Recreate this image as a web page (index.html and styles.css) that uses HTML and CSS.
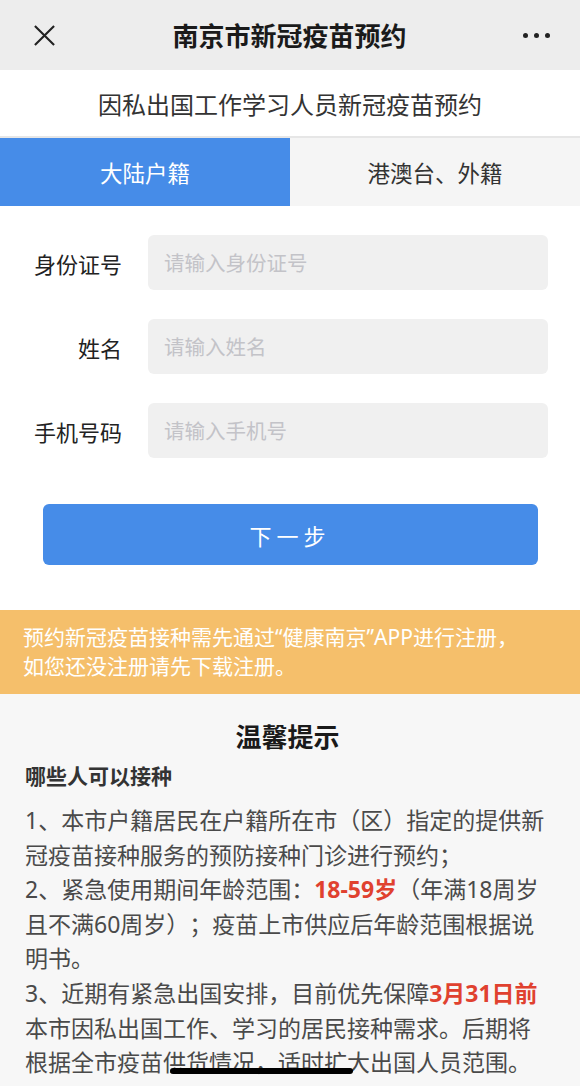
FILE: index.html
```html
<!DOCTYPE html>
<html lang="zh-CN">
<head>
    <meta charset="UTF-8">
    <meta name="viewport" content="width=device-width, initial-scale=1.0">
    <title>南京市新冠疫苗预约</title>
    <link rel="stylesheet" href="styles.css">
</head>
<body>
    <div class="nav-bar">
        <svg class="nav-close" width="23" height="23" viewBox="0 0 24 24">
            <path d="M2 2 L22 22 M22 2 L2 22" stroke="#222" stroke-width="2.2" fill="none"/>
        </svg>
        <div class="nav-title">南京市新冠疫苗预约</div>
        <div class="nav-more"><span></span><span></span><span></span></div>
    </div>

    <div class="sub-title">因私出国工作学习人员新冠疫苗预约</div>

    <div class="tabs">
        <div class="tab active">大陆户籍</div>
        <div class="tab">港澳台、外籍</div>
    </div>

    <div class="form">
        <div class="form-row">
            <label for="id-no">身份证号</label>
            <input type="text" id="id-no" placeholder="请输入身份证号">
        </div>
        <div class="form-row">
            <label for="name">姓名</label>
            <input type="text" id="name" placeholder="请输入姓名">
        </div>
        <div class="form-row">
            <label for="phone">手机号码</label>
            <input type="text" id="phone" placeholder="请输入手机号">
        </div>
        <button class="next-btn">下一步</button>
    </div>

    <div class="notice">预约新冠疫苗接种需先通过“健康南京”APP进行注册，如您还没注册请先下载注册。</div>

    <div class="tips">
        <h2>温馨提示</h2>
        <h3>哪些人可以接种</h3>
        <p>1、本市户籍居民在户籍所在市（区）指定的提供新冠疫苗接种服务的预防接种门诊进行预约；</p>
        <p>2、紧急使用期间年龄范围：<b class="hl">18-59岁</b>（年满18周岁且不满60周岁）；疫苗上市供应后年龄范围根据说明书。</p>
        <p>3、近期有紧急出国安排，目前优先保障<b class="hl">3月31日前</b>本市因私出国工作、学习的居民接种需求。后期将根据全市疫苗供货情况，适时扩大出国人员范围。</p>
    </div>

    <div class="home-bar"></div>
</body>
</html>
```

FILE: styles.css
```css
* {
    box-sizing: border-box;
}
body {
    margin: 0;
    font-family: "Noto Sans", "Noto Sans CJK SC", sans-serif;
    color: #333;
    background-color: #f7f7f7;
    height: 1086px;
    overflow: hidden;
    text-spacing-trim: space-all;
}
.nav-bar {
    height: 70px;
    background-color: #ededed;
    display: flex;
    align-items: center;
    padding: 0 30px 0 33px;
}
.nav-close {
    flex: none;
}
.nav-title {
    flex: 1;
    text-align: center;
    font-size: 26px;
    font-weight: bold;
    color: #1a1a1a;
}
.nav-more {
    display: flex;
    gap: 6px;
}
.nav-more span {
    width: 5px;
    height: 5px;
    border-radius: 50%;
    background-color: #222;
}
.sub-title {
    height: 68px;
    background-color: #fff;
    border-bottom: 2px solid #e6e6e6;
    display: flex;
    align-items: center;
    justify-content: center;
    font-size: 24px;
    color: #333;
}
.tabs {
    display: flex;
    height: 68px;
}
.tab {
    flex: 1;
    display: flex;
    align-items: center;
    justify-content: center;
    font-size: 22.5px;
    background-color: #f5f5f5;
    color: #333;
}
.tab.active {
    background-color: #468ce8;
    color: #fff;
}
.form {
    background-color: #fff;
    padding: 29px 32px 45px 0;
}
.form-row {
    display: flex;
    align-items: center;
    margin-bottom: 29px;
}
.form-row:last-of-type {
    margin-bottom: 46px;
}
.form-row label {
    width: 148px;
    padding-right: 26px;
    text-align: right;
    font-size: 22px;
    color: #222;
}
.form-row input {
    flex: 1;
    height: 55px;
    border: none;
    border-radius: 6px;
    background-color: #f0f0f0;
    padding: 0 16px;
    font-family: inherit;
    font-size: 20.5px;
    outline: none;
}
.form-row input::placeholder {
    color: #c3c3c8;
}
.next-btn {
    display: block;
    width: 495px;
    height: 61px;
    margin-left: 43px;
    padding-left: 5px;
    border: none;
    border-radius: 6px;
    background-color: #468ce8;
    color: #fff;
    font-family: inherit;
    font-size: 22px;
    letter-spacing: 5px;
}
.notice {
    background-color: #f5bf6b;
    color: #fff;
    font-size: 21px;
    line-height: 29px;
    padding: 13px 50px 13px 23px;
}
.tips {
    padding: 25px 30px 0 25px;
}
.tips h2 {
    margin: 0;
    text-align: center;
    font-size: 26px;
    line-height: 36px;
    color: #1a1a1a;
}
.tips h3 {
    margin: 7px 0 13px;
    font-size: 21px;
    line-height: 28px;
    color: #333;
}
.tips p {
    margin: 0;
    font-size: 23px;
    line-height: 34.6px;
    color: #4a4a4a;
}
.hl {
    color: #e0412f;
}
.home-bar {
    position: absolute;
    left: 170px;
    top: 1068px;
    width: 183px;
    height: 6px;
    border-radius: 3px;
    background-color: #000;
}
```
